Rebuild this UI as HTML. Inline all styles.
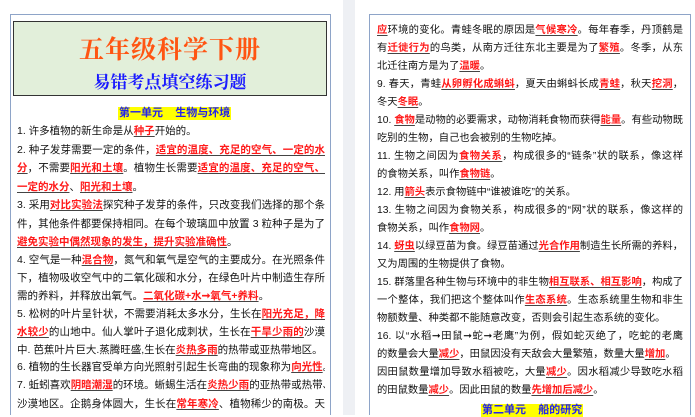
<!DOCTYPE html>
<html><head><meta charset="utf-8"><style>
*{margin:0;padding:0;box-sizing:border-box}
body{width:695px;height:415px;overflow:hidden;background:#fff;position:relative;font-family:"Liberation Sans","Noto Sans CJK SC",sans-serif;color:#111}
.gap{position:absolute;left:343px;top:0;width:12px;height:415px;background:#eef0f4}
.box{position:absolute;border:1px solid #8ea4c8;border-bottom:none}
.title{position:absolute;left:13px;top:21px;width:314px;height:75px;background:#e2efda;border:1px solid #333}
.t1{position:absolute;left:0;width:100%;top:8px;text-align:center;color:#ff5512;font-size:25px;font-weight:bold;font-family:"Noto Serif CJK SC",serif;letter-spacing:1px}
.t2{position:absolute;left:0;width:100%;top:46px;text-align:center;color:#1a1aff;font-size:17px;font-weight:bold;font-family:"Noto Serif CJK SC",serif}
.ln{position:absolute;font-size:10.5px;white-space:nowrap;height:18px;line-height:18px;overflow:hidden}
.j{text-align:justify;text-align-last:justify}
.L .ln{left:17px;width:308px}
.R .ln{left:377px;width:306px;font-size:10.3px}
b{color:#ff1a1a;font-weight:bold;text-decoration:underline;text-decoration-color:#444;text-underline-offset:2px}
.h{position:absolute;background:#ffff00;color:#2222ee;font-weight:bold;font-size:11px;line-height:13px;height:13px;padding:0 1px;white-space:pre}
</style></head><body>
<div class="gap"></div>
<div class="box" style="left:10px;top:14px;width:321px;height:401px"></div>
<div class="box" style="left:369px;top:14px;width:322px;height:401px"></div>
<div class="title"><div class="t1">五年级科学下册</div><div class="t2">易错考点填空练习题</div></div>
<div class="h" style="left:118px;top:107px">第一单元    生物与环境</div>
<div class="L">
<div class="ln" style="top:122px">1. 许多植物的新生命是从<b>种子</b>开始的。</div>
<div class="ln j" style="top:141px">2. 种子发芽需要一定的条件，<b>适宜的温度、充足的空气、一定的水</b></div>
<div class="ln j" style="top:159px"><b>分</b>，不需要<b>阳光和土壤</b>。植物生长需要<b>适宜的温度、充足的空气、</b></div>
<div class="ln" style="top:178px"><b>一定的水分</b>、<b>阳光和土壤</b>。</div>
<div class="ln j" style="top:196px">3. 采用<b>对比实验法</b>探究种子发芽的条件，只改变我们选择的那个条</div>
<div class="ln j" style="top:215px">件，其他条件都要保持相同。在每个玻璃皿中放置 3 粒种子是为了</div>
<div class="ln" style="top:233px"><b>避免实验中偶然现象的发生，提升实验准确性</b>。</div>
<div class="ln j" style="top:251px">4. 空气是一种<b>混合物</b>，氮气和氧气是空气的主要成分。在光照条件</div>
<div class="ln j" style="top:269px">下，植物吸收空气中的二氧化碳和水分，在绿色叶片中制造生存所</div>
<div class="ln" style="top:287px">需的养料，并释放出氧气。<b>二氧化碳+水➞氧气+养料</b>。</div>
<div class="ln j" style="top:305px">5. 松树的叶片呈针状，不需要消耗太多水分，生长在<b>阳光充足，降</b></div>
<div class="ln j" style="top:323px"><b>水较少</b>的山地中。仙人掌叶子退化成刺状，生长在<b>干旱少雨的</b>沙漠</div>
<div class="ln" style="top:341px">中. 芭蕉叶片巨大.蒸腾旺盛,生长在<b>炎热多雨</b>的热带或亚热带地区。</div>
<div class="ln" style="top:358px">6. 植物的生长器官受单方向光照射引起生长弯曲的现象称为<b>向光性</b>。</div>
<div class="ln j" style="top:376px">7. 蚯蚓喜欢<b>阴暗潮湿</b>的环境。蜥蜴生活在<b>炎热少雨</b>的亚热带或热带、</div>
<div class="ln j" style="top:395px">沙漠地区。企鹅身体圆大，生长在<b>常年寒冷</b>、植物稀少的南极。天</div>
</div>
<div class="R">
<div class="ln j" style="top:22px"><b>应</b>环境的变化。青蛙冬眠的原因是<b>气候寒冷</b>。每年春季，丹顶鹤是</div>
<div class="ln j" style="top:40px">有<b>迁徙行为</b>的鸟类，从南方迁往东北主要是为了<b>繁殖</b>。冬季，从东</div>
<div class="ln" style="top:58px">北迁往南方是为了<b>温暖</b>。</div>
<div class="ln j" style="top:76px">9. 春天，青蛙<b>从卵孵化成蝌蚪</b>，夏天由蝌蚪长成<b>青蛙</b>，秋天<b>挖洞</b>，</div>
<div class="ln" style="top:94px">冬天<b>冬眠</b>。</div>
<div class="ln j" style="top:112px">10. <b>食物</b>是动物的必要需求，动物消耗食物而获得<b>能量</b>。有些动物既</div>
<div class="ln" style="top:130px">吃别的生物，自己也会被别的生物吃掉。</div>
<div class="ln j" style="top:148px">11. 生物之间因为<b>食物关系</b>，构成很多的“链条”状的联系，像这样</div>
<div class="ln" style="top:166px">的食物关系，叫作<b>食物链</b>。</div>
<div class="ln" style="top:184px">12. 用<b>箭头</b>表示食物链中“谁被谁吃”的关系。</div>
<div class="ln j" style="top:202px">13. 生物之间因为食物关系，构成很多的“网”状的联系，像这样的</div>
<div class="ln" style="top:220px">食物关系，叫作<b>食物网</b>。</div>
<div class="ln j" style="top:238px">14. <b>蚜虫</b>以绿豆苗为食。绿豆苗通过<b>光合作用</b>制造生长所需的养料，</div>
<div class="ln" style="top:256px">又为周围的生物提供了食物。</div>
<div class="ln j" style="top:274px">15. 群落里各种生物与环境中的非生物<b>相互联系、相互影响</b>，构成了</div>
<div class="ln j" style="top:292px">一个整体，我们把这个整体叫作<b>生态系统</b>。生态系统里生物和非生</div>
<div class="ln" style="top:310px">物额数量、种类都不能随意改变，否则会引起生态系统的变化。</div>
<div class="ln j" style="top:328px">16. 以“水稻➞田鼠➞蛇➞老鹰”为例，假如蛇灭绝了，吃蛇的老鹰</div>
<div class="ln" style="top:346px">的数量会大量<b>减少</b>，田鼠因没有天敌会大量繁殖，数量大量<b>增加</b>。</div>
<div class="ln j" style="top:364px">因田鼠数量增加导致水稻被吃，大量<b>减少</b>。因水稻减少导致吃水稻</div>
<div class="ln" style="top:382px">的田鼠数量<b>减少</b>。因此田鼠的数量<b>先增加后减少</b>。</div>
</div>
<div class="h" style="left:481px;top:404px">第二单元    船的研究</div>
</body></html>
